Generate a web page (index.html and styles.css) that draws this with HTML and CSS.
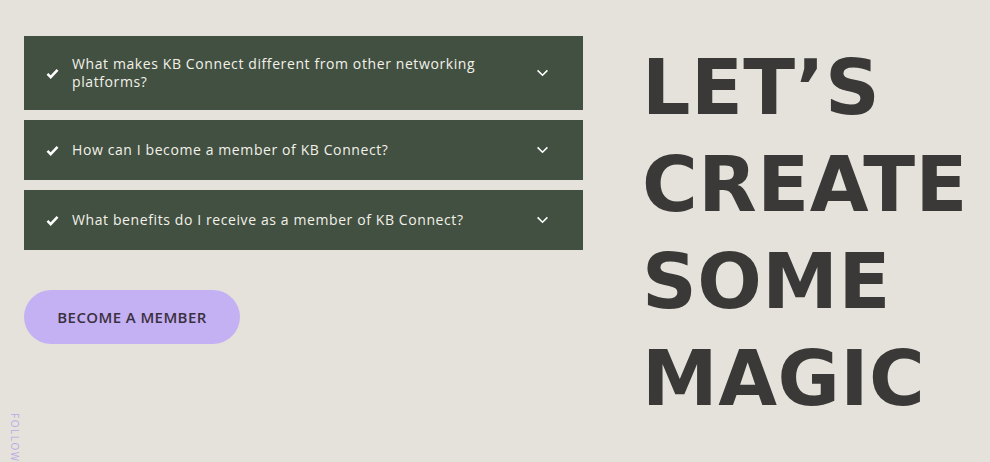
FILE: index.html
```html
<!DOCTYPE html>
<html lang="en">

<head>
  <meta charset="UTF-8">
  <meta name="viewport" content="width=device-width, initial-scale=1.0">
  <title>KB Connect | FAQ</title>
  <link rel="stylesheet" href="styles.css">
</head>

<body>
  <div class="page">
    <div class="faq-col">
      <div class="faq-list">
        <div class="faq-item tall">
          <svg class="check" viewBox="0 0 14 12"><path d="M1.5 6.5 L5 10 L12.5 2" fill="none" stroke="#fff" stroke-width="2.8" stroke-linejoin="miter"/></svg>
          <span class="question">What makes KB Connect different from other networking platforms?</span>
          <svg class="chevron" viewBox="0 0 14 9"><path d="M1.5 1.5 L7 7 L12.5 1.5" fill="none" stroke="#fff" stroke-width="1.8"/></svg>
        </div>
        <div class="faq-item">
          <svg class="check" viewBox="0 0 14 12"><path d="M1.5 6.5 L5 10 L12.5 2" fill="none" stroke="#fff" stroke-width="2.8" stroke-linejoin="miter"/></svg>
          <span class="question">How can I become a member of KB Connect?</span>
          <svg class="chevron" viewBox="0 0 14 9"><path d="M1.5 1.5 L7 7 L12.5 1.5" fill="none" stroke="#fff" stroke-width="1.8"/></svg>
        </div>
        <div class="faq-item">
          <svg class="check" viewBox="0 0 14 12"><path d="M1.5 6.5 L5 10 L12.5 2" fill="none" stroke="#fff" stroke-width="2.8" stroke-linejoin="miter"/></svg>
          <span class="question">What benefits do I receive as a member of KB Connect?</span>
          <svg class="chevron" viewBox="0 0 14 9"><path d="M1.5 1.5 L7 7 L12.5 1.5" fill="none" stroke="#fff" stroke-width="1.8"/></svg>
        </div>
      </div>

      <button class="member-btn">BECOME A MEMBER</button>
    </div>

    <h1 class="headline">LET’S<br>CREATE<br>SOME<br>MAGIC</h1>
  </div>

  <div class="follow">FOLLOW US</div>
</body>

</html>
```

FILE: styles.css
```css
body {
  font-family: "Open Sans", Arial, sans-serif;
  background-color: #e5e2db;
  margin: 0;
  padding: 0;
  overflow: hidden;
}

.page {
  display: flex;
  align-items: flex-start;
  padding: 36px 0 0 24px;
}

.faq-col {
  width: 559px;
  flex-shrink: 0;
}

.faq-list {
  display: flex;
  flex-direction: column;
  gap: 10px;
}

.faq-item {
  background-color: #415040;
  height: 60px;
  display: flex;
  align-items: center;
  padding: 0 34px 0 22px;
  box-sizing: border-box;
  color: #f3f1ea;
}

.faq-item.tall {
  height: 74px;
}

.check {
  width: 13px;
  height: 11px;
  flex-shrink: 0;
  margin-right: 13px;
}

.question {
  flex: 1;
  font-size: 14px;
  line-height: 18px;
  letter-spacing: 0.6px;
  padding-right: 40px;
}

.chevron {
  width: 13px;
  height: 8px;
  flex-shrink: 0;
}

.member-btn {
  margin-top: 40px;
  width: 216px;
  height: 54px;
  border: none;
  border-radius: 27px;
  background-color: #c4b1f3;
  color: #3a3040;
  font-family: "Open Sans", Arial, sans-serif;
  font-size: 15px;
  font-weight: 600;
  letter-spacing: 0.4px;
  cursor: pointer;
}

.headline {
  margin: 3px 0 0 59px;
  font-family: "DejaVu Sans", sans-serif;
  font-weight: bold;
  font-size: 76px;
  line-height: 97px;
  color: #3a3937;
  letter-spacing: 0.5px;
}

.follow {
  position: absolute;
  left: 8px;
  top: 413px;
  writing-mode: vertical-rl;
  white-space: nowrap;
  font-size: 10px;
  letter-spacing: 1.5px;
  color: #b9aae6;
}
```
